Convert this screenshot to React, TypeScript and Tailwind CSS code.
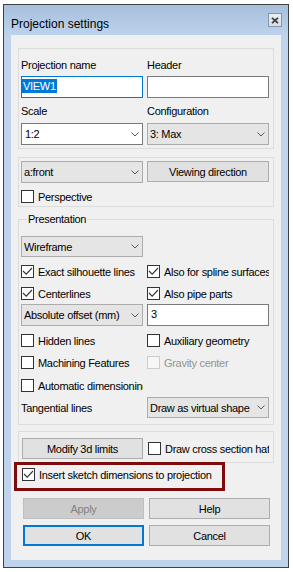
import React from "react";

const Chevron = () => (
  <svg width="8" height="5" viewBox="0 0 8 5" className="shrink-0">
    <path d="M0.5 0.5 L4 4 L7.5 0.5" fill="none" stroke="#5a5a5a" strokeWidth="1" />
  </svg>
);

const Box = ({ checked = false, disabled = false }: { checked?: boolean; disabled?: boolean }) => (
  <span
    className={
      disabled
        ? "w-[13px] h-[13px] border border-[#cccccc] bg-[#f6f6f6] flex shrink-0"
        : "w-[13px] h-[13px] border border-[#333333] bg-white flex shrink-0"
    }
  >
    {checked && (
      <svg width="11" height="11" viewBox="0 0 11 11">
        <path d="M1 5 L4.2 8.2 L10 2" fill="none" stroke="#333333" strokeWidth="1.1" />
      </svg>
    )}
  </span>
);

const Check = ({
  label,
  checked = false,
  disabled = false,
  w = "w-[122px]",
}: {
  label: string;
  checked?: boolean;
  disabled?: boolean;
  w?: string;
}) => (
  <div className={`${w} h-[13px] flex items-center overflow-hidden whitespace-nowrap`}>
    <Box checked={checked} disabled={disabled} />
    <span className={disabled ? "ml-[4px] text-[#939393]" : "ml-[4px]"}>{label}</span>
  </div>
);

const Combo = ({
  text,
  white = false,
  h = "h-[22px]",
  textW = "flex-1",
}: {
  text: string;
  white?: boolean;
  h?: string;
  textW?: string;
}) => (
  <div
    className={
      white
        ? `w-[122px] ${h} border border-[#7a7a7a] bg-white flex items-center pl-[3px] pr-[3px]`
        : `w-[122px] ${h} border border-[#acacac] bg-[#e5e5e5] flex items-center pl-[2px] pr-[3px]`
    }
  >
    <span className={`${textW} overflow-hidden whitespace-nowrap`}>{text}</span>
    <span className="ml-auto flex">
      <Chevron />
    </span>
  </div>
);

const Button = ({ text, w = "w-[121px]" }: { text: string; w?: string }) => (
  <div className={`${w} h-[21px] border border-[#adadad] bg-[#e1e1e1] flex items-center justify-center`}>
    {text}
  </div>
);

export default function App() {
  return (
    <div className="w-[293px] h-[572px] bg-white pt-[4px] pl-[3px] font-['Liberation_Sans',Arial,sans-serif] text-[11px] tracking-[-0.3px] leading-[14px] text-black">
      <div className="w-[286px] h-[564px] border border-[#404040] bg-[#bfd4ec] flex flex-col">
        {/* title bar */}
        <div className="h-[30px] shrink-0 flex justify-between pl-[7px] pr-[6px] bg-linear-to-b from-[#a7bfdc] to-[#bdd3ec]">
          <span className="mt-[12px] text-[12px] tracking-normal text-black">Projection settings</span>
          <div className="mt-[8px] w-[14px] h-[14px] border border-[#8796ab] bg-linear-to-b from-[#e9eef4] to-[#d3dde9] flex items-center justify-center">
            <svg width="8" height="7" viewBox="0 0 8 7">
              <path d="M1 0.8 L7 6.2 M7 0.8 L1 6.2" stroke="#3d3d3d" strokeWidth="1.8" fill="none" />
            </svg>
          </div>
        </div>

        {/* client */}
        <div className="flex-1 mx-[7px] mb-[7px] bg-[#f0f0f0] relative flex flex-col">
          {/* group 1 */}
          <div className="ml-[7px] mt-[13px] w-[256px] h-[101px] border border-[#dcdcdc] pl-[2px] pt-[9px] flex flex-col">
            <div className="flex gap-[4px]">
              <div className="w-[122px]">Projection name</div>
              <div className="w-[122px]">Header</div>
            </div>
            <div className="flex gap-[4px] mt-[4px]">
              <div className="w-[122px] h-[22px] border border-[#0078d7] bg-white pt-[2px]">
                <span className="bg-[#0078d7] text-white px-[1px] inline-block">VIEW1</span>
              </div>
              <div className="w-[122px] h-[22px] border border-[#7a7a7a] bg-white" />
            </div>
            <div className="flex gap-[4px] mt-[6px]">
              <div className="w-[122px]">Scale</div>
              <div className="w-[122px]">Configuration</div>
            </div>
            <div className="flex gap-[4px] mt-[5px]">
              <Combo text="1:2" white />
              <Combo text="3: Max" />
            </div>
          </div>

          {/* group 2 */}
          <div className="ml-[7px] mt-[8px] w-[256px] h-[50px] border border-[#dcdcdc] pl-[2px] pt-[3px] flex flex-col">
            <div className="flex gap-[4px]">
              <Combo text="a:front" />
              <Button text="Viewing direction" w="w-[122px]" />
            </div>
            <div className="mt-[7px] flex">
              <Check label="Perspective" />
            </div>
          </div>

          {/* presentation group */}
          <div className="relative ml-[7px] mt-[12px] w-[256px] h-[206px] border border-[#dcdcdc] pl-[2px] pt-[16px] flex flex-col">
            <span className="absolute left-[8px] -top-[8px] bg-[#f0f0f0] px-[1px]">Presentation</span>
            <Combo text="Wireframe" h="h-[21px]" />
            <div className="flex gap-[4px] mt-[8px]">
              <Check label="Exact silhouette lines" checked />
              <Check label="Also for spline surfaces" checked />
            </div>
            <div className="flex gap-[4px] mt-[9px]">
              <Check label="Centerlines" checked />
              <Check label="Also pipe parts" checked />
            </div>
            <div className="flex gap-[4px] mt-[4px]">
              <Combo text="Absolute offset (mm)" />
              <div className="w-[122px] h-[22px] border border-[#7a7a7a] bg-white pl-[3px] pt-[2px]">3</div>
            </div>
            <div className="flex gap-[4px] mt-[8px]">
              <Check label="Hidden lines" />
              <Check label="Auxiliary geometry" />
            </div>
            <div className="flex gap-[4px] mt-[9px]">
              <Check label="Machining Features" />
              <Check label="Gravity center" disabled />
            </div>
            <div className="flex gap-[4px] mt-[10px]">
              <Check label="Automatic dimensioning" />
            </div>
            <div className="flex gap-[4px] mt-[5px]">
              <div className="w-[122px] h-[21px] flex items-center">Tangential lines</div>
              <Combo text="Draw as virtual shape" h="h-[21px]" textW="w-[100px]" />
            </div>
          </div>

          {/* group 4 */}
          <div className="ml-[7px] mt-[6px] w-[256px] h-[32px] border border-[#dcdcdc] pl-[3px] pt-[3px] flex">
            <div className="flex items-center">
              <Button text="Modify 3d limits" />
              <div className="ml-[5px] flex">
                <Check label="Draw cross section hatching" w="w-[121px]" />
              </div>
            </div>
          </div>

          {/* insert sketch */}
          <div className="ml-[11px] mt-[5px] flex">
            <Check label="Insert sketch dimensions to projection" checked w="w-[200px]" />
          </div>

          {/* buttons */}
          <div className="ml-[12px] mt-[17px] flex gap-[5px]">
            <div className="w-[121px] h-[21px] border border-[#bfbfbf] bg-[#cccccc] text-[#838383] flex items-center justify-center">
              Apply
            </div>
            <Button text="Help" />
          </div>
          <div className="ml-[12px] mt-[6px] flex gap-[5px]">
            <div className="w-[121px] h-[21px] border-2 border-[#0078d7] bg-[#e1e1e1] flex items-center justify-center">
              OK
            </div>
            <Button text="Cancel" />
          </div>

          {/* annotation highlight */}
          <div className="absolute left-[3px] top-[427px] w-[211px] h-[29px] border-[3px] border-[#7d0b0b]" />
        </div>
      </div>
    </div>
  );
}
